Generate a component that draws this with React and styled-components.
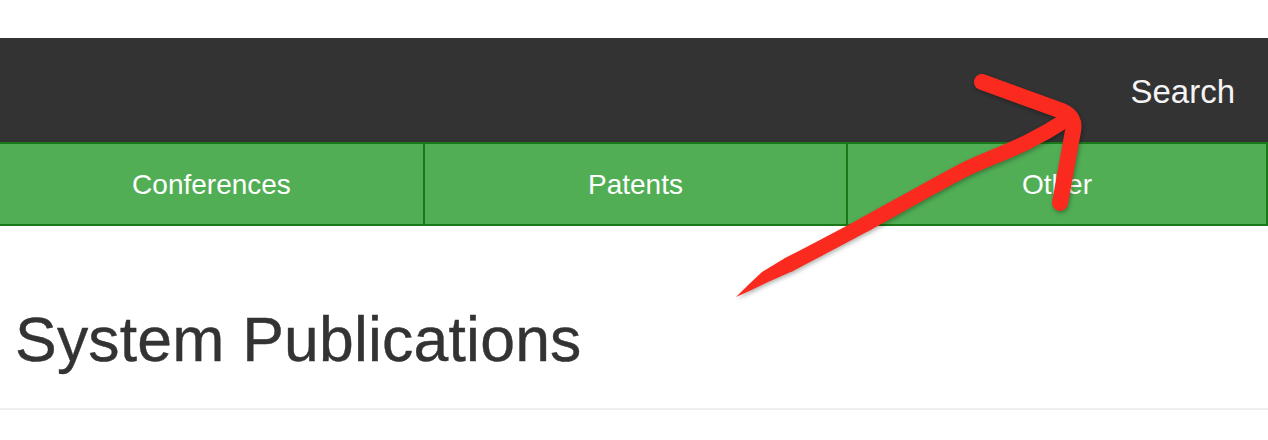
import React from "react";
import styled, { createGlobalStyle } from "styled-components";

const Global = createGlobalStyle`
  html, body { margin: 0; padding: 0; background: #fff; }
  body { font-family: "Liberation Sans", Arial, Helvetica, sans-serif; }
`;

const Page = styled.div`
  position: relative;
  width: 1268px;
  height: 440px;
  overflow: hidden;
  padding-top: 38px;
  box-sizing: border-box;
`;

const TopBar = styled.header`
  height: 104px;
  background: #333333;
  display: flex;
  align-items: center;
  justify-content: flex-end;
  padding: 2px 33px 0 0;
  box-sizing: border-box;
`;

const SearchLink = styled.a`
  color: #f4f4f4;
  font-size: 33px;
  line-height: 33px;
  text-decoration: none;
`;

const Tabs = styled.nav`
  display: grid;
  grid-template-columns: 425px 423px 1fr;
  height: 84px;
  background: #51ae55;
  border-top: 2px solid #177a17;
  border-bottom: 2px solid #177a17;
  box-sizing: border-box;
`;

const Tab = styled.a`
  display: flex;
  align-items: center;
  justify-content: center;
  color: #fff;
  font-size: 28px;
  padding-top: 2px;
  border-right: 2px solid #177a17;
  text-decoration: none;
`;

const Content = styled.main`
  padding: 79px 15px 0 15px;
`;

const Title = styled.h1`
  margin: 0;
  font-size: 62.5px;
  line-height: 68px;
  font-weight: 400;
  color: #333;
  -webkit-text-stroke: 0.4px #333;
  letter-spacing: 0.2px;
`;

const Rule = styled.hr`
  margin: 35px -15px 0 -15px;
  border: 0;
  border-top: 2px solid #eeeeee;
`;

const Annotation = styled.svg`
  position: absolute;
  left: 0;
  top: 0;
  width: 1268px;
  height: 440px;
  pointer-events: none;
  filter: drop-shadow(1px 2px 2px rgba(0, 0, 0, 0.3));
`;

const RED = "#fb2a1f";

export default function App() {
  return (
    <>
      <Global />
      <Page>
        <TopBar>
          <SearchLink href="#">Search</SearchLink>
        </TopBar>
        <Tabs>
          <Tab href="#">Conferences</Tab>
          <Tab href="#">Patents</Tab>
          <Tab href="#">Other</Tab>
        </Tabs>
        <Content>
          <Title>System Publications</Title>
          <Rule />
        </Content>
        <Annotation viewBox="0 0 1268 440">
          <path
            d="M 736 297 Q 748 285 762 272 L 786 257.6 L 794 270.4 L 768 282 Q 752 290 736 297 Z"
            fill={RED}
          />
          <path
            d="M 790 264 C 815 251, 840 238, 862 226 S 930 188, 960 172 S 1020 150, 1066 120"
            stroke={RED}
            strokeWidth="15"
            fill="none"
            strokeLinecap="round"
            strokeLinejoin="round"
          />
          <path
            d="M 982 82 L 1062 111 Q 1076 117 1073 131 L 1060 203"
            stroke={RED}
            strokeWidth="16"
            fill="none"
            strokeLinecap="round"
            strokeLinejoin="round"
          />
        </Annotation>
      </Page>
    </>
  );
}
